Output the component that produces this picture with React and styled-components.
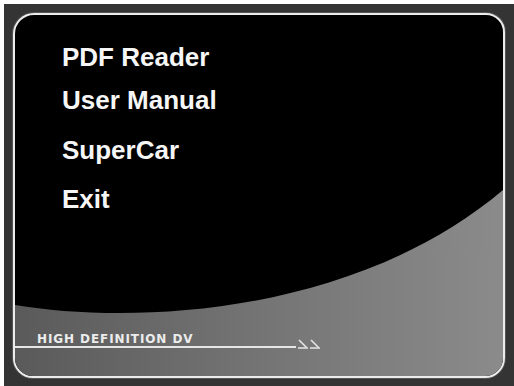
import React from "react";
import styled, { createGlobalStyle } from "styled-components";

const Global = createGlobalStyle`
  html, body { margin: 0; padding: 0; background: #ffffff; }
  body { width: 514px; height: 386px; overflow: hidden; }
`;

const Screen = styled.div`
  box-sizing: border-box;
  margin: 4px 0 0 4px;
  width: 510px;
  height: 382px;
  background: #343434;
  padding: 9px 0 0 9px;
`;

const Frame = styled.div`
  position: relative;
  box-sizing: border-box;
  width: 492px;
  height: 365px;
  border: 2px solid #ececec;
  border-radius: 21px 19px 20px 20px;
  background: #000;
  overflow: hidden;
  display: flex;
  flex-direction: column;
  box-shadow: 0 0 0 1px #555;
`;

const Swoosh = styled.svg`
  position: absolute;
  inset: 0;
  width: 100%;
  height: 100%;
  z-index: 0;
`;

const Menu = styled.nav`
  position: relative;
  z-index: 1;
  display: flex;
  flex-direction: column;
  padding: 27px 0 0 47px;
`;

const MenuItem = styled.div`
  font-family: "Liberation Sans", Arial, sans-serif;
  font-weight: bold;
  font-size: 26px;
  line-height: 30px;
  color: #f6f6f6;
  margin-top: ${(p) => p.$gap || 0}px;
`;

const Footer = styled.footer`
  position: relative;
  z-index: 1;
  margin-top: auto;
  display: flex;
  flex-direction: column;
  padding-bottom: 28px;
`;

const Tagline = styled.div`
  font-family: "DejaVu Sans", Verdana, sans-serif;
  font-weight: bold;
  font-size: 12px;
  line-height: 14px;
  letter-spacing: 0.9px;
  color: #ececec;
  padding-left: 22px;
`;

const RuleRow = styled.div`
  display: flex;
  align-items: flex-end;
  height: 2px;
`;

const Rule = styled.div`
  flex: none;
  width: 281px;
  height: 2px;
  background: #e6e6e6;
`;

const Chevrons = styled.svg`
  flex: none;
  display: block;
  margin-left: 1px;
  margin-bottom: -1px;
`;

export default function App() {
  const items = [
    { label: "PDF Reader", gap: 0 },
    { label: "User Manual", gap: 13 },
    { label: "SuperCar", gap: 20 },
    { label: "Exit", gap: 19 },
  ];
  return (
    <>
      <Global />
      <Screen>
        <Frame>
          <Swoosh viewBox="0 0 488 361" preserveAspectRatio="none">
            <defs>
              <linearGradient id="g" x1="0" y1="0" x2="1" y2="0">
                <stop offset="0" stopColor="#5a5a5a" />
                <stop offset="0.5" stopColor="#747474" />
                <stop offset="1" stopColor="#8b8b8b" />
              </linearGradient>
            </defs>
            <path
              d="M0,290 C120,310 340,300 488,175 L488,361 L0,361 Z"
              fill="url(#g)"
            />
          </Swoosh>
          <Menu>
            {items.map((it) => (
              <MenuItem key={it.label} $gap={it.gap}>
                {it.label}
              </MenuItem>
            ))}
          </Menu>
          <Footer>
            <Tagline>HIGH DEFINITION DV</Tagline>
            <RuleRow>
              <Rule />
              <Chevrons width="26" height="10" viewBox="0 0 26 10">
                <g stroke="#e6e6e6" strokeWidth="1.6" fill="none">
                  <path d="M2,1 L9.5,8.5" />
                  <path d="M1,9 L11,9" />
                  <path d="M14,1 L21.5,8.5" />
                  <path d="M13,9 L23,9" />
                </g>
              </Chevrons>
            </RuleRow>
          </Footer>
        </Frame>
      </Screen>
    </>
  );
}
